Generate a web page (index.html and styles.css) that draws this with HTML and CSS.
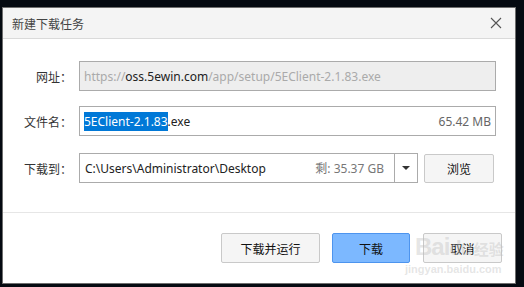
FILE: index.html
```html
<!DOCTYPE html>
<html lang="zh-CN">
<head>
<meta charset="utf-8">
<title>新建下载任务</title>
<link rel="stylesheet" href="styles.css">
</head>
<body>
<div class="dialog">
  <div class="titlebar">
    <span class="title">新建下载任务</span>
    <svg class="close" width="12" height="12" viewBox="0 0 12 12"><path d="M1 1 L11 11 M11 1 L1 11" stroke="#555" stroke-width="1.1" fill="none"/></svg>
  </div>
  <div class="content">
    <div class="row r1">
      <label class="lbl">网址：</label>
      <div class="field url"><span><span class="dim">https://</span>oss.5ewin.com<span class="dim">/app/setup/5EClient-2.1.83.exe</span></span></div>
    </div>
    <div class="row r2">
      <label class="lbl">文件名：</label>
      <div class="field name"><span><span class="sel">5EClient-2.1.83</span>.exe</span><span class="size">65.42 MB</span></div>
    </div>
    <div class="row r3">
      <label class="lbl">下载到：</label>
      <div class="combo">
        <div class="combo-text"><span>C:\Users\Administrator\Desktop</span><span class="size">剩: 35.37 GB</span></div>
        <div class="combo-arrow"><span class="tri"></span></div>
      </div>
      <button class="btn browse">浏览</button>
    </div>
  </div>
  <div class="footer">
    <button class="btn run">下载并运行</button>
    <button class="btn primary">下载</button>
    <button class="btn cancel">取消</button>
  </div>
  <div class="watermark"><span class="wm-big">Bai<span class="paw">du</span><span class="wm-cn">经验</span></span><span class="wm-small">jingyan.baidu.com</span></div>
</div>
</body>
</html>
```
FILE: styles.css
```css
html, body {
  margin: 0;
  padding: 0;
}
body {
  background: #050a11;
  width: 524px;
  height: 287px;
  overflow: hidden;
  font-family: "Noto Sans", "Noto Sans CJK SC", sans-serif;
  font-size: 12px;
  color: #222;
  padding-top: 7px;
  padding-left: 2px;
  box-sizing: border-box;
}
.dialog {
  position: relative;
  width: 514px;
  height: 277px;
  box-sizing: border-box;
  border: 1px solid #6e6e6e;
  background: #fff;
  display: flex;
  flex-direction: column;
}
.titlebar {
  height: 30px;
  flex: none;
  background: #f4f4f4;
  border-bottom: 1px solid #dadada;
  display: flex;
  align-items: center;
  justify-content: space-between;
  padding: 0 13px 0 9px;
}
.title {
  font-family: "Noto Sans CJK SC", sans-serif;
  font-size: 12px;
  color: #444;
}
.close { display: block; }
.content {
  padding: 22px 19px 0 0;
  display: flex;
  flex-direction: column;
  height: 174px;
  flex: none;
  box-sizing: border-box;
  border-bottom: 1px solid #e6e6e6;
}
.row {
  display: flex;
  align-items: center;
  height: 30px;
}
.r2 { margin-top: 15px; }
.r3 { margin-top: 17px; }
.lbl {
  width: 69px;
  text-align: right;
  margin-right: 7px;
  font-family: "Noto Sans CJK SC", sans-serif;
  font-size: 12px;
  color: #333;
  flex: none;
}
.field {
  flex: 1;
  height: 30px;
  box-sizing: border-box;
  border: 1px solid #ababab;
  display: flex;
  align-items: center;
  justify-content: space-between;
  padding: 0 4px 0 4px;
  white-space: nowrap;
}
.url {
  background: #eeeeee;
  color: #222;
}
.dim { color: #aaa; }
.sel {
  background: #0078d7;
  color: #fff;
  padding: 1px 0;
}
.size { color: #666; }
.combo {
  width: 339px;
  height: 30px;
  box-sizing: border-box;
  border: 1px solid #ababab;
  display: flex;
  flex: none;
}
.combo-text {
  flex: 1;
  display: flex;
  align-items: center;
  justify-content: space-between;
  padding: 0 10px 0 5px;
  white-space: nowrap;
  border-right: 1px solid #ababab;
}
.combo-text .size { color: #777; }
.combo-arrow {
  width: 22px;
  display: flex;
  align-items: center;
  justify-content: center;
}
.tri {
  width: 0;
  height: 0;
  border-left: 4px solid transparent;
  border-right: 4px solid transparent;
  border-top: 4px solid #333;
}
.btn {
  font-family: "Noto Sans CJK SC", sans-serif;
  font-size: 12px;
  color: #111;
  background: #f5f5f5;
  border: 1px solid #c9c9c9;
  border-radius: 2px;
  padding: 0;
  height: 30px;
}
.browse {
  width: 70px;
  height: 29px;
  margin-left: 6px;
}
.footer {
  display: flex;
  justify-content: flex-end;
  gap: 12px;
  padding: 20px 13px 0 0;
}
.run { width: 99px; }
.primary {
  width: 78px;
  background: #7cb8ff;
  border-color: #4d94ee;
}
.cancel { width: 79px; margin-left: 1px; }
.watermark {
  position: absolute;
  left: 412px;
  top: 225px;
  display: flex;
  flex-direction: column;
  align-items: flex-start;
  pointer-events: none;
  white-space: nowrap;
  color: rgba(190, 190, 190, 0.4);
}
.wm-big {
  font-family: "Liberation Sans", sans-serif;
  font-size: 24px;
  font-weight: bold;
  line-height: 28px;
  letter-spacing: -1px;
}
.paw { font-size: 20px; }
.wm-cn {
  font-family: "Noto Sans CJK SC", sans-serif;
  font-size: 15px;
  letter-spacing: 0;
  margin-left: 2px;
}
.wm-small {
  font-family: "Liberation Sans", sans-serif;
  font-size: 11px;
  font-weight: bold;
  line-height: 12px;
  margin-left: -10px;
}
```
